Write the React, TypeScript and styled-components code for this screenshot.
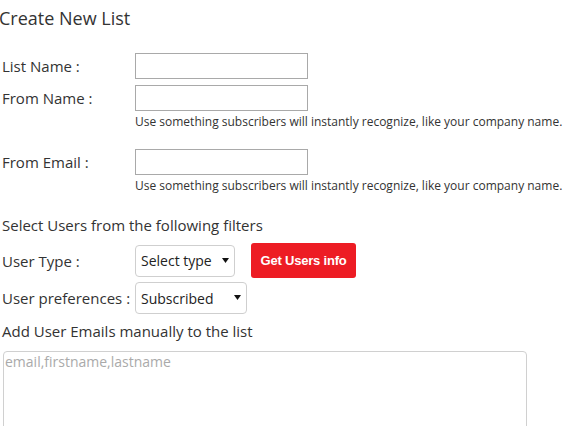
import styled, { createGlobalStyle } from "styled-components";

const GlobalStyle = createGlobalStyle`
  html, body {
    margin: 0;
    padding: 0;
    background: #fff;
  }
  body {
    font-family: "Open Sans", "Liberation Sans", sans-serif;
    color: #333;
  }
  * {
    box-sizing: border-box;
  }
`;

const Page = styled.div`
  width: 582px;
  height: 426px;
  overflow: hidden;
`;

const Title = styled.h2`
  margin: 6px 0 0 -1px;
  font-size: 18px;
  line-height: 24px;
  font-weight: 400;
`;

const Form = styled.form`
  display: flex;
  flex-direction: column;
  padding-left: 2px;
`;

interface RowProps {
  mt?: number;
}

const Row = styled.div<RowProps>`
  display: flex;
  align-items: center;
  margin-top: ${({ mt }) => (mt !== undefined ? `${mt}px` : "0")};
`;

const Label = styled.label`
  width: 133px;
  flex-shrink: 0;
  font-size: 15px;
  line-height: 20px;
`;

const TextInput = styled.input`
  width: 173px;
  height: 26px;
  border: 1px solid #a9a9a9;
  border-radius: 0;
  padding: 2px 4px;
  font-family: inherit;
  font-size: 14px;
  outline: none;
`;

const Help = styled.div<RowProps>`
  margin-top: ${({ mt }) => (mt !== undefined ? `${mt}px` : "3px")};
  padding-left: 133px;
  font-size: 12px;
  line-height: 16px;
`;

const Heading = styled.div<RowProps>`
  margin-top: ${({ mt }) => (mt !== undefined ? `${mt}px` : "0")};
  font-size: 15px;
  line-height: 20px;
`;

const SelectWrap = styled.span`
  position: relative;
  display: inline-block;
`;

const Select = styled.select<{ w: number }>`
  appearance: none;
  -webkit-appearance: none;
  width: ${({ w }) => w}px;
  height: 32px;
  padding: 0 18px 0 5px;
  border: 1px solid #cfcfcf;
  border-radius: 4px;
  background: #fff;
  font-family: inherit;
  font-size: 14px;
  color: #222;
  outline: none;
`;

const Arrow = styled.svg`
  position: absolute;
  right: 6px;
  top: 13px;
  pointer-events: none;
`;

const RedButton = styled.button`
  margin-left: 16px;
  width: 105px;
  height: 35px;
  border: none;
  border-radius: 3px;
  background: #ed1c24;
  color: #fff;
  font-family: "Liberation Sans", Arial, sans-serif;
  font-weight: 700;
  font-size: 13px;
  letter-spacing: -0.2px;
  cursor: pointer;
`;

const Emails = styled.textarea`
  margin: 10px 0 0 1px;
  width: 524px;
  height: 110px;
  border: 1px solid #d0d0d0;
  border-radius: 4px;
  padding: 0 1px;
  resize: none;
  font-family: inherit;
  font-size: 14px;
  line-height: 20px;
  outline: none;
  &::placeholder {
    color: #aaa;
  }
`;

const Dropdown = ({ w, options }: { w: number; options: string[] }) => (
  <SelectWrap>
    <Select w={w}>
      {options.map((o) => (
        <option key={o}>{o}</option>
      ))}
    </Select>
    <Arrow width="7" height="5" viewBox="0 0 7 5">
      <path d="M0 0h7L3.5 5z" fill="#111" />
    </Arrow>
  </SelectWrap>
);

function App() {
  return (
    <Page>
      <GlobalStyle />
      <Title>Create New List</Title>
      <Form onSubmit={(e) => e.preventDefault()}>
        <Row mt={23}>
          <Label>List Name :</Label>
          <TextInput type="text" />
        </Row>
        <Row mt={6}>
          <Label>From Name :</Label>
          <TextInput type="text" />
        </Row>
        <Help>Use something subscribers will instantly recognize, like your company name.</Help>
        <Row mt={19}>
          <Label>From Email :</Label>
          <TextInput type="text" />
        </Row>
        <Help>Use something subscribers will instantly recognize, like your company name.</Help>
        <Heading mt={21}>Select Users from the following filters</Heading>
        <Row mt={8}>
          <Label>User Type :</Label>
          <Dropdown w={100} options={["Select type", "Customer", "Reseller"]} />
          <RedButton type="button">Get Users info</RedButton>
        </Row>
        <Row mt={4}>
          <Label>User preferences :</Label>
          <Dropdown w={112} options={["Subscribed", "Unsubscribed", "All"]} />
        </Row>
        <Heading mt={7}>Add User Emails manually to the list</Heading>
        <Emails placeholder="email,firstname,lastname" />
      </Form>
    </Page>
  );
}

export default App;
